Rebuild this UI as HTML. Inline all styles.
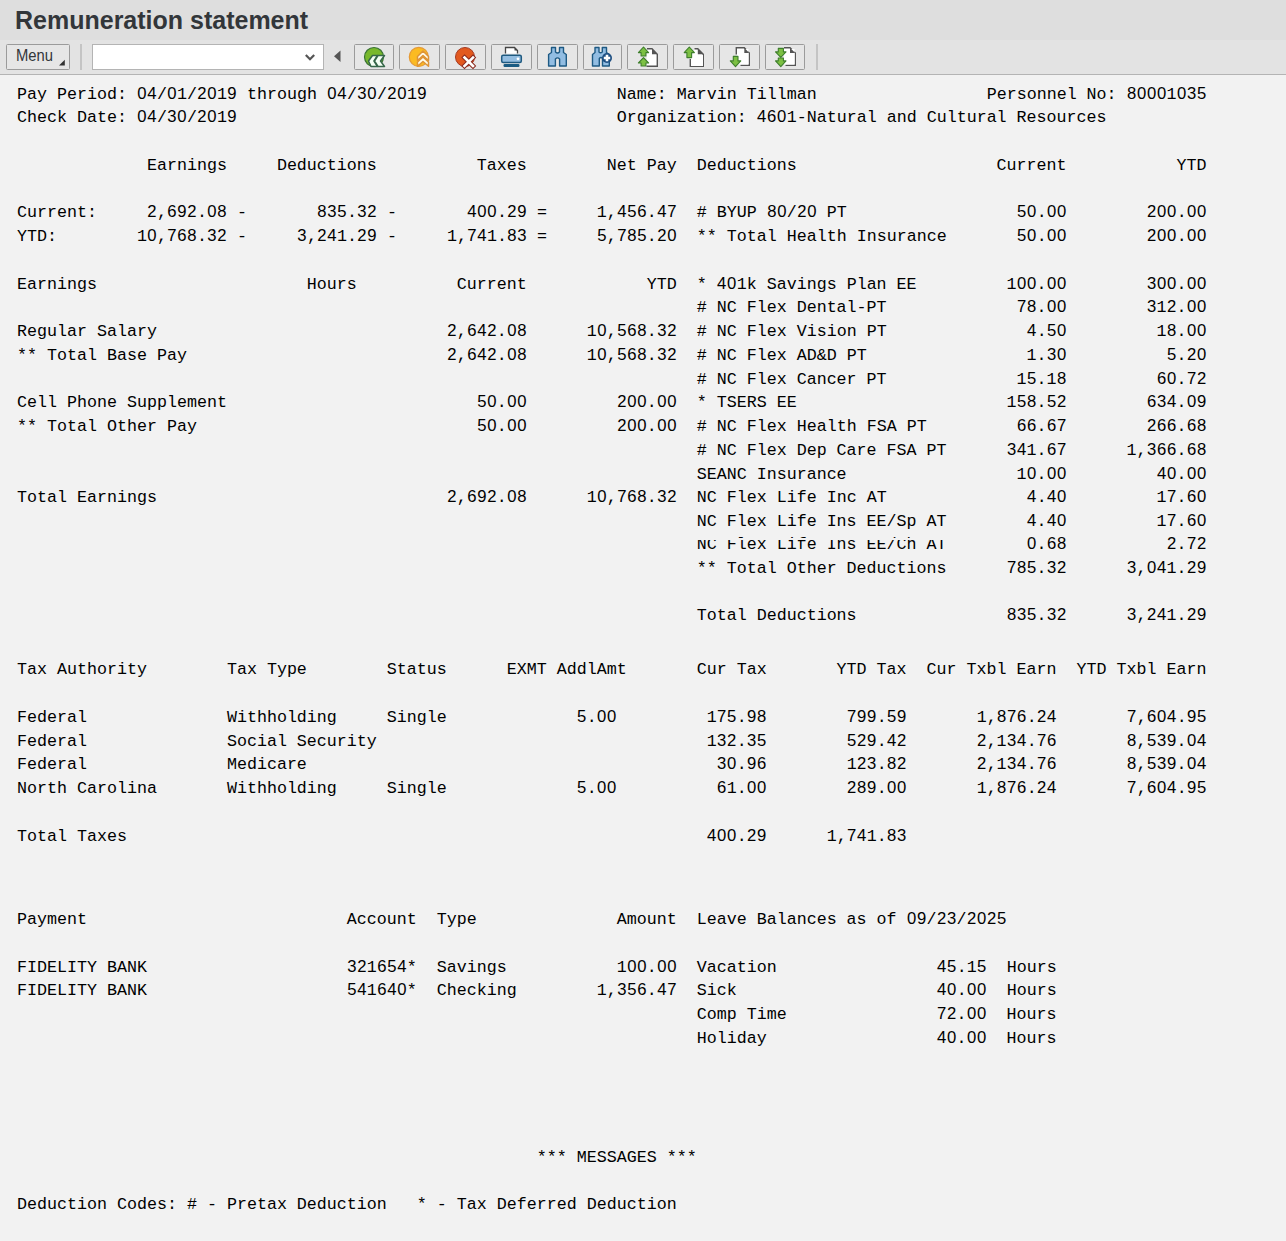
<!DOCTYPE html>
<html><head><meta charset="utf-8"><title>Remuneration statement</title>
<style>
html,body{margin:0;padding:0;}
body{width:1286px;height:1241px;overflow:hidden;background:#f2f2f2;position:relative;font-family:"Liberation Sans",sans-serif;}
#title{position:absolute;left:0;top:0;width:1286px;height:40px;background:#dedede;}
#title span{position:absolute;left:15px;top:5px;font-weight:bold;font-size:25px;line-height:30px;color:#32363a;white-space:nowrap;letter-spacing:0px}
#tb{position:absolute;left:0;top:40px;width:1286px;height:34px;background:#e3e3e3;border-bottom:1px solid #b4b4b4;}
.ln{position:absolute;left:17px;font-family:"Liberation Mono",monospace;font-size:16.6667px;line-height:20px;height:20px;white-space:pre;color:#000;}
.z{font-family:"Liberation Sans",sans-serif;font-weight:normal;display:inline-block;width:10px;text-align:center;line-height:0;font-size:16.67px;}
.ln.clip::after{content:'';position:absolute;left:680px;width:260px;top:3px;height:2px;background:#f2f2f2;}
</style></head><body>
<div id="title"><span>Remuneration statement</span></div>
<div id="tb">
<svg width="1286" height="75" viewBox="0 0 1286 75" style="position:absolute;left:0;top:-40px">
<g fill="#e6e6e6" stroke="#9b9b9b" stroke-width="1">
<rect x="6.5" y="44.5" width="63" height="25" rx="1"/>
<rect x="354.5" y="44.5" width="39" height="25" rx="1"/>
<rect x="399.5" y="44.5" width="40" height="25" rx="1"/>
<rect x="445.5" y="44.5" width="40" height="25" rx="1"/>
<rect x="491.5" y="44.5" width="40" height="25" rx="1"/>
<rect x="537.5" y="44.5" width="40" height="25" rx="1"/>
<rect x="583.5" y="44.5" width="38" height="25" rx="1"/>
<rect x="627.5" y="44.5" width="40" height="25" rx="1"/>
<rect x="673.5" y="44.5" width="40" height="25" rx="1"/>
<rect x="719.5" y="44.5" width="40" height="25" rx="1"/>
<rect x="765.5" y="44.5" width="39" height="25" rx="1"/>
</g>
<text x="16" y="61" font-family="Liberation Sans" font-size="15.6" fill="#32363a" textLength="37" lengthAdjust="spacingAndGlyphs">Menu</text>
<path d="M64.8,59.8 L64.8,65.6 L59,65.6 Z" fill="#333"/>
<rect x="80" y="44" width="2" height="26" fill="#c4c4c4"/>
<rect x="92.5" y="44.5" width="231" height="25" fill="#fff" stroke="#b4b4b4"/>
<path d="M305.8,55 L310,59.3 L314.2,55" fill="none" stroke="#555" stroke-width="2.2"/>
<path d="M340.5,50.5 L334,56.3 L340.5,62 Z" fill="#555"/>
<rect x="816" y="44" width="2" height="26" fill="#c4c4c4"/>
<!-- 1 back: green circle with << -->
<circle cx="374" cy="57" r="9.5" fill="#78b82c" stroke="#3a7434" stroke-width="1.2"/>
<path d="M372.5,55.5 L368.5,61 L371,66.5 L377.5,66.5 L374,61 L377.5,55.5 Z" fill="#f4fff4" stroke="#36674a" stroke-width="1.5" stroke-linejoin="round"/>
<path d="M378,55.5 L374.5,61 L378,66.5 L384.5,66.5 L380.5,61 L384.5,55.5 Z" fill="#f4fff4" stroke="#36674a" stroke-width="1.5" stroke-linejoin="round"/>
<!-- 2 exit: orange circle with ^^ -->
<circle cx="418.8" cy="56.9" r="9.5" fill="#fbbb22" stroke="#e59a35" stroke-width="1.2"/>
<path d="M417.5,56.5 L423,51 L428.5,56.5 L428.5,60.5 L423,55.5 L417.5,60.5 Z" fill="#fffbe8" stroke="#de9436" stroke-width="1.5" stroke-linejoin="round"/>
<path d="M417.5,62 L423,57 L428.5,62 L428.5,66.3 L423,61.5 L417.5,66.3 Z" fill="#fffbe8" stroke="#de9436" stroke-width="1.5" stroke-linejoin="round"/>
<!-- 3 cancel: red circle with x -->
<circle cx="465" cy="57" r="9.5" fill="#e2591f" stroke="#a53a22" stroke-width="1"/>
<path d="M464.5,57.5 L473,66 M473,57.5 L464.5,66" stroke="#8a2a1e" stroke-width="4.6" stroke-linecap="square"/>
<path d="M464.5,57.5 L473,66 M473,57.5 L464.5,66" stroke="#fff" stroke-width="2.6" stroke-linecap="square"/>
<!-- 4 printer -->
<path d="M505.5,53.5 L505.5,47.5 L514.5,47.5 L517.5,50.5 L517.5,53.5" fill="#fff" stroke="#454545" stroke-width="1.3"/>
<path d="M514.5,47.5 L517.5,50.5 L514.5,50.5 Z" fill="#454545"/>
<rect x="501.7" y="55.3" width="19.6" height="7.2" rx="1.5" fill="#93bde0" stroke="#1f5a80" stroke-width="1.5"/>
<circle cx="518" cy="58.8" r="1.4" fill="#fff"/>
<rect x="503.5" y="64" width="16" height="3" rx="1.2" fill="#1a5b82"/>
<!-- 5 binoculars -->
<path d="M551.5,47.5 L555.5,47.5 L555.5,52 Q557.5,54 559.5,52 L559.5,47.5 L563.5,47.5 L563.5,52.5 L566.3,54.5 L566.3,66 L559.6,66 L559.6,59 Q557.5,56.7 555.4,59 L555.4,66 L548.6,66 L548.6,54.5 L551.5,52.5 Z" fill="#92bde2" stroke="#1e5a84" stroke-width="1.4" stroke-linejoin="round"/>
<!-- 6 binoculars + -->
<path d="M595,47.5 L599,47.5 L599,52 Q600.5,53.5 602.3,52 L602.3,47.5 L606.5,47.5 L606.5,52.5 L609.3,54.5 L609.3,66 L602.5,66 L602.5,58.5 Q601,56.5 599.3,58.5 L599.3,66 L592.5,66 L592.5,54.5 L595,52.5 Z" fill="#92bde2" stroke="#1e5a84" stroke-width="1.4" stroke-linejoin="round"/>
<circle cx="607" cy="58" r="5" fill="#1e4f82"/>
<path d="M607,54.8 L607,61.2 M603.8,58 L610.2,58" stroke="#fff" stroke-width="2.6"/>
<!-- 7 first page: page + two up arrows -->
<path d="M646.5,66.3 L657.3,66.3 L657.3,54.2 L652,48.8 L647,48.8" fill="#fff" stroke="#555" stroke-width="1.4"/>
<path d="M652,48.8 L657.3,54.2 L652,54.2 Z" fill="#555"/>
<path d="M643.5,47 L648.6,52.6 L645.9,52.6 L645.9,56 L641.1,56 L641.1,52.6 L638.4,52.6 Z" fill="#7cc043" stroke="#3e7e2c" stroke-width="1.1" stroke-linejoin="round"/>
<path d="M643.5,57.6 L648.6,63 L645.9,63 L645.9,66 L641.1,66 L641.1,63 L638.4,63 Z" fill="#7cc043" stroke="#3e7e2c" stroke-width="1.1" stroke-linejoin="round"/>
<!-- 8 previous page -->
<path d="M690.3,59 L690.3,66.3 L703.3,66.3 L703.3,54.2 L697.8,48.8 L694.5,48.8" fill="#fff" stroke="#555" stroke-width="1.4"/>
<rect x="691" y="55" width="12" height="11" fill="#fff"/>
<path d="M697.8,48.8 L703.3,54.2 L697.8,54.2 Z" fill="#555"/>
<path d="M689.3,47 L694.4,52.6 L691.6,52.6 L691.6,57.6 L686.9,57.6 L686.9,52.6 L684.2,52.6 Z" fill="#7cc043" stroke="#3e7e2c" stroke-width="1.1" stroke-linejoin="round"/>
<!-- 9 next page -->
<path d="M736.3,54.5 L736.3,47.7 L744.3,47.7 L749.3,53 L749.3,65.3 L740.5,65.3" fill="#fff" stroke="#555" stroke-width="1.4"/>
<rect x="737" y="49" width="11.5" height="15.6" fill="#fff"/>
<path d="M744.3,47.7 L749.3,53 L744.3,53 Z" fill="#555"/>
<path d="M735.5,66.6 L740.8,60.9 L738,60.9 L738,56.4 L733.3,56.4 L733.3,60.9 L730.3,60.9 Z" fill="#7cc043" stroke="#3e7e2c" stroke-width="1.1" stroke-linejoin="round"/>
<!-- 10 last page -->
<path d="M784,47.7 L790,47.7 L795.3,53 L795.3,65.3 L785.5,65.3" fill="#fff" stroke="#555" stroke-width="1.4"/>
<rect x="784" y="49" width="10.6" height="15.6" fill="#fff"/>
<path d="M790,47.7 L795.3,53 L790,53 Z" fill="#555"/>
<path d="M780.8,57.3 L786,51.9 L783.4,51.9 L783.4,48.4 L778.3,48.4 L778.3,51.9 L775.5,51.9 Z" fill="#7cc043" stroke="#3e7e2c" stroke-width="1.1" stroke-linejoin="round"/>
<path d="M780.8,66.6 L786,60.9 L783.4,60.9 L783.4,58 L778.3,58 L778.3,60.9 L775.5,60.9 Z" fill="#7cc043" stroke="#3e7e2c" stroke-width="1.1" stroke-linejoin="round"/>
</svg>

</div>
<div class="ln" style="top:85px">Pay Period: <b class="z">0</b><b class="z">4</b>/<b class="z">0</b>1/<b class="z">2</b><b class="z">0</b>1<b class="z">9</b> through <b class="z">0</b><b class="z">4</b>/<b class="z">3</b><b class="z">0</b>/<b class="z">2</b><b class="z">0</b>1<b class="z">9</b>                   Name: Marvin Tillman                 Personnel No: <b class="z">8</b><b class="z">0</b><b class="z">0</b><b class="z">0</b>1<b class="z">0</b><b class="z">3</b><b class="z">5</b></div>
<div class="ln" style="top:108px">Check Date: <b class="z">0</b><b class="z">4</b>/<b class="z">3</b><b class="z">0</b>/<b class="z">2</b><b class="z">0</b>1<b class="z">9</b>                                      Organization: <b class="z">4</b><b class="z">6</b><b class="z">0</b>1-Natural and Cultural Resources</div>
<div class="ln" style="top:156px">             Earnings     Deductions          Taxes        Net Pay  Deductions                    Current           YTD</div>
<div class="ln" style="top:203px">Current:     <b class="z">2</b>,<b class="z">6</b><b class="z">9</b><b class="z">2</b>.<b class="z">0</b><b class="z">8</b> -       <b class="z">8</b><b class="z">3</b><b class="z">5</b>.<b class="z">3</b><b class="z">2</b> -       <b class="z">4</b><b class="z">0</b><b class="z">0</b>.<b class="z">2</b><b class="z">9</b> =     1,<b class="z">4</b><b class="z">5</b><b class="z">6</b>.<b class="z">4</b><b class="z">7</b>  # BYUP <b class="z">8</b><b class="z">0</b>/<b class="z">2</b><b class="z">0</b> PT                 <b class="z">5</b><b class="z">0</b>.<b class="z">0</b><b class="z">0</b>        <b class="z">2</b><b class="z">0</b><b class="z">0</b>.<b class="z">0</b><b class="z">0</b></div>
<div class="ln" style="top:227px">YTD:        1<b class="z">0</b>,<b class="z">7</b><b class="z">6</b><b class="z">8</b>.<b class="z">3</b><b class="z">2</b> -     <b class="z">3</b>,<b class="z">2</b><b class="z">4</b>1.<b class="z">2</b><b class="z">9</b> -     1,<b class="z">7</b><b class="z">4</b>1.<b class="z">8</b><b class="z">3</b> =     <b class="z">5</b>,<b class="z">7</b><b class="z">8</b><b class="z">5</b>.<b class="z">2</b><b class="z">0</b>  ** Total Health Insurance       <b class="z">5</b><b class="z">0</b>.<b class="z">0</b><b class="z">0</b>        <b class="z">2</b><b class="z">0</b><b class="z">0</b>.<b class="z">0</b><b class="z">0</b></div>
<div class="ln" style="top:275px">Earnings                     Hours          Current            YTD  * <b class="z">4</b><b class="z">0</b>1k Savings Plan EE         1<b class="z">0</b><b class="z">0</b>.<b class="z">0</b><b class="z">0</b>        <b class="z">3</b><b class="z">0</b><b class="z">0</b>.<b class="z">0</b><b class="z">0</b></div>
<div class="ln" style="top:298px">                                                                    # NC Flex Dental-PT             <b class="z">7</b><b class="z">8</b>.<b class="z">0</b><b class="z">0</b>        <b class="z">3</b>1<b class="z">2</b>.<b class="z">0</b><b class="z">0</b></div>
<div class="ln" style="top:322px">Regular Salary                             <b class="z">2</b>,<b class="z">6</b><b class="z">4</b><b class="z">2</b>.<b class="z">0</b><b class="z">8</b>      1<b class="z">0</b>,<b class="z">5</b><b class="z">6</b><b class="z">8</b>.<b class="z">3</b><b class="z">2</b>  # NC Flex Vision PT              <b class="z">4</b>.<b class="z">5</b><b class="z">0</b>         1<b class="z">8</b>.<b class="z">0</b><b class="z">0</b></div>
<div class="ln" style="top:346px">** Total Base Pay                          <b class="z">2</b>,<b class="z">6</b><b class="z">4</b><b class="z">2</b>.<b class="z">0</b><b class="z">8</b>      1<b class="z">0</b>,<b class="z">5</b><b class="z">6</b><b class="z">8</b>.<b class="z">3</b><b class="z">2</b>  # NC Flex AD&amp;D PT                1.<b class="z">3</b><b class="z">0</b>          <b class="z">5</b>.<b class="z">2</b><b class="z">0</b></div>
<div class="ln" style="top:370px">                                                                    # NC Flex Cancer PT             1<b class="z">5</b>.1<b class="z">8</b>         <b class="z">6</b><b class="z">0</b>.<b class="z">7</b><b class="z">2</b></div>
<div class="ln" style="top:393px">Cell Phone Supplement                         <b class="z">5</b><b class="z">0</b>.<b class="z">0</b><b class="z">0</b>         <b class="z">2</b><b class="z">0</b><b class="z">0</b>.<b class="z">0</b><b class="z">0</b>  * TSERS EE                     1<b class="z">5</b><b class="z">8</b>.<b class="z">5</b><b class="z">2</b>        <b class="z">6</b><b class="z">3</b><b class="z">4</b>.<b class="z">0</b><b class="z">9</b></div>
<div class="ln" style="top:417px">** Total Other Pay                            <b class="z">5</b><b class="z">0</b>.<b class="z">0</b><b class="z">0</b>         <b class="z">2</b><b class="z">0</b><b class="z">0</b>.<b class="z">0</b><b class="z">0</b>  # NC Flex Health FSA PT         <b class="z">6</b><b class="z">6</b>.<b class="z">6</b><b class="z">7</b>        <b class="z">2</b><b class="z">6</b><b class="z">6</b>.<b class="z">6</b><b class="z">8</b></div>
<div class="ln" style="top:441px">                                                                    # NC Flex Dep Care FSA PT      <b class="z">3</b><b class="z">4</b>1.<b class="z">6</b><b class="z">7</b>      1,<b class="z">3</b><b class="z">6</b><b class="z">6</b>.<b class="z">6</b><b class="z">8</b></div>
<div class="ln" style="top:465px">                                                                    SEANC Insurance                 1<b class="z">0</b>.<b class="z">0</b><b class="z">0</b>         <b class="z">4</b><b class="z">0</b>.<b class="z">0</b><b class="z">0</b></div>
<div class="ln" style="top:488px">Total Earnings                             <b class="z">2</b>,<b class="z">6</b><b class="z">9</b><b class="z">2</b>.<b class="z">0</b><b class="z">8</b>      1<b class="z">0</b>,<b class="z">7</b><b class="z">6</b><b class="z">8</b>.<b class="z">3</b><b class="z">2</b>  NC Flex Life Inc AT              <b class="z">4</b>.<b class="z">4</b><b class="z">0</b>         1<b class="z">7</b>.<b class="z">6</b><b class="z">0</b></div>
<div class="ln" style="top:512px">                                                                    NC Flex Life Ins EE/Sp AT        <b class="z">4</b>.<b class="z">4</b><b class="z">0</b>         1<b class="z">7</b>.<b class="z">6</b><b class="z">0</b></div>
<div class="ln clip" style="top:535px">                                                                    NC Flex Life Ins EE/Ch AT        <b class="z">0</b>.<b class="z">6</b><b class="z">8</b>          <b class="z">2</b>.<b class="z">7</b><b class="z">2</b></div>
<div class="ln" style="top:559px">                                                                    ** Total Other Deductions      <b class="z">7</b><b class="z">8</b><b class="z">5</b>.<b class="z">3</b><b class="z">2</b>      <b class="z">3</b>,<b class="z">0</b><b class="z">4</b>1.<b class="z">2</b><b class="z">9</b></div>
<div class="ln" style="top:606px">                                                                    Total Deductions               <b class="z">8</b><b class="z">3</b><b class="z">5</b>.<b class="z">3</b><b class="z">2</b>      <b class="z">3</b>,<b class="z">2</b><b class="z">4</b>1.<b class="z">2</b><b class="z">9</b></div>
<div class="ln" style="top:660px">Tax Authority        Tax Type        Status      EXMT AddlAmt       Cur Tax       YTD Tax  Cur Txbl Earn  YTD Txbl Earn</div>
<div class="ln" style="top:708px">Federal              Withholding     Single             <b class="z">5</b>.<b class="z">0</b><b class="z">0</b>         1<b class="z">7</b><b class="z">5</b>.<b class="z">9</b><b class="z">8</b>        <b class="z">7</b><b class="z">9</b><b class="z">9</b>.<b class="z">5</b><b class="z">9</b>       1,<b class="z">8</b><b class="z">7</b><b class="z">6</b>.<b class="z">2</b><b class="z">4</b>       <b class="z">7</b>,<b class="z">6</b><b class="z">0</b><b class="z">4</b>.<b class="z">9</b><b class="z">5</b></div>
<div class="ln" style="top:732px">Federal              Social Security                                 1<b class="z">3</b><b class="z">2</b>.<b class="z">3</b><b class="z">5</b>        <b class="z">5</b><b class="z">2</b><b class="z">9</b>.<b class="z">4</b><b class="z">2</b>       <b class="z">2</b>,1<b class="z">3</b><b class="z">4</b>.<b class="z">7</b><b class="z">6</b>       <b class="z">8</b>,<b class="z">5</b><b class="z">3</b><b class="z">9</b>.<b class="z">0</b><b class="z">4</b></div>
<div class="ln" style="top:755px">Federal              Medicare                                         <b class="z">3</b><b class="z">0</b>.<b class="z">9</b><b class="z">6</b>        1<b class="z">2</b><b class="z">3</b>.<b class="z">8</b><b class="z">2</b>       <b class="z">2</b>,1<b class="z">3</b><b class="z">4</b>.<b class="z">7</b><b class="z">6</b>       <b class="z">8</b>,<b class="z">5</b><b class="z">3</b><b class="z">9</b>.<b class="z">0</b><b class="z">4</b></div>
<div class="ln" style="top:779px">North Carolina       Withholding     Single             <b class="z">5</b>.<b class="z">0</b><b class="z">0</b>          <b class="z">6</b>1.<b class="z">0</b><b class="z">0</b>        <b class="z">2</b><b class="z">8</b><b class="z">9</b>.<b class="z">0</b><b class="z">0</b>       1,<b class="z">8</b><b class="z">7</b><b class="z">6</b>.<b class="z">2</b><b class="z">4</b>       <b class="z">7</b>,<b class="z">6</b><b class="z">0</b><b class="z">4</b>.<b class="z">9</b><b class="z">5</b></div>
<div class="ln" style="top:827px">Total Taxes                                                          <b class="z">4</b><b class="z">0</b><b class="z">0</b>.<b class="z">2</b><b class="z">9</b>      1,<b class="z">7</b><b class="z">4</b>1.<b class="z">8</b><b class="z">3</b></div>
<div class="ln" style="top:910px">Payment                          Account  Type              Amount  Leave Balances as of <b class="z">0</b><b class="z">9</b>/<b class="z">2</b><b class="z">3</b>/<b class="z">2</b><b class="z">0</b><b class="z">2</b><b class="z">5</b></div>
<div class="ln" style="top:958px">FIDELITY BANK                    <b class="z">3</b><b class="z">2</b>1<b class="z">6</b><b class="z">5</b><b class="z">4</b>*  Savings           1<b class="z">0</b><b class="z">0</b>.<b class="z">0</b><b class="z">0</b>  Vacation                <b class="z">4</b><b class="z">5</b>.1<b class="z">5</b>  Hours</div>
<div class="ln" style="top:981px">FIDELITY BANK                    <b class="z">5</b><b class="z">4</b>1<b class="z">6</b><b class="z">4</b><b class="z">0</b>*  Checking        1,<b class="z">3</b><b class="z">5</b><b class="z">6</b>.<b class="z">4</b><b class="z">7</b>  Sick                    <b class="z">4</b><b class="z">0</b>.<b class="z">0</b><b class="z">0</b>  Hours</div>
<div class="ln" style="top:1005px">                                                                    Comp Time               <b class="z">7</b><b class="z">2</b>.<b class="z">0</b><b class="z">0</b>  Hours</div>
<div class="ln" style="top:1029px">                                                                    Holiday                 <b class="z">4</b><b class="z">0</b>.<b class="z">0</b><b class="z">0</b>  Hours</div>
<div class="ln" style="top:1148px">                                                    *** MESSAGES ***</div>
<div class="ln" style="top:1195px">Deduction Codes: # - Pretax Deduction   * - Tax Deferred Deduction</div>
</body></html>
